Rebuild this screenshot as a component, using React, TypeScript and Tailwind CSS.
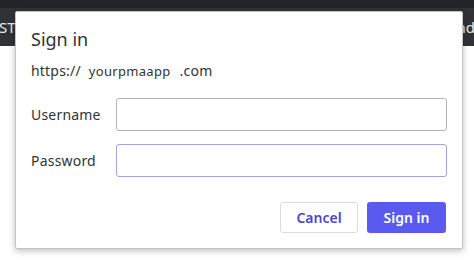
import React from "react";

export default function App() {
  return (
    <div
      className="relative w-[474px] h-[271px] overflow-hidden bg-white"
      style={{ fontFamily: '"Noto Sans", "Open Sans", sans-serif' }}
    >
      {/* page behind the modal */}
      <div className="h-[8px] bg-[#232427]" />
      <div className="h-[38px] bg-[#313235] flex items-center justify-between text-[15px] text-[#e8e8e8]">
        <span className="-ml-[1px]">ST:</span>
        <span className="-mr-[1px]">nd</span>
      </div>

      {/* Sign in dialog */}
      <div className="absolute left-[15px] top-[11px] w-[448px] h-[238px] bg-white rounded-[2px] border border-[#c4c4c4] shadow-[0_2px_6px_rgba(0,0,0,0.25)] flex flex-col px-[15px] text-[#333]">
        <h1 className="mt-[15px] text-[18px] leading-[24px] text-[#333]">Sign in</h1>
        <div className="mt-[10px] flex items-baseline text-[14px] leading-[20px]">
          <span className="tracking-[0.2px]">https://</span>
          <span className="ml-[8px] text-[13px] tracking-[0.3px]">yourpmaapp</span>
          <span className="ml-[9px] tracking-[0.3px]">.com</span>
        </div>

        <div className="mt-[17px] flex flex-col gap-[13px]">
          <label className="flex items-center">
            <span className="w-[85px] text-[14px] tracking-[0.2px]">Username</span>
            <input
              type="text"
              className="w-[331px] h-[33px] rounded-[3px] border border-[#b5b5b5] bg-white outline-none px-2"
            />
          </label>
          <label className="flex items-center">
            <span className="w-[85px] text-[14px] tracking-[0.2px]">Password</span>
            <input
              type="password"
              className="w-[331px] h-[33px] rounded-[3px] border-[1.5px] border-[#a7a3dc] bg-white outline-none px-2"
            />
          </label>
        </div>

        <div className="mt-[25px] flex justify-end gap-[9px] pr-[1px]">
          <button className="w-[78px] h-[31px] rounded-[3px] border border-[#dcdcdc] bg-white text-[14px] font-semibold text-[#4d48c6]">
            Cancel
          </button>
          <button className="w-[79px] h-[31px] rounded-[3px] bg-[#5a5af0] text-[14px] font-semibold text-white">
            Sign in
          </button>
        </div>
      </div>
    </div>
  );
}
